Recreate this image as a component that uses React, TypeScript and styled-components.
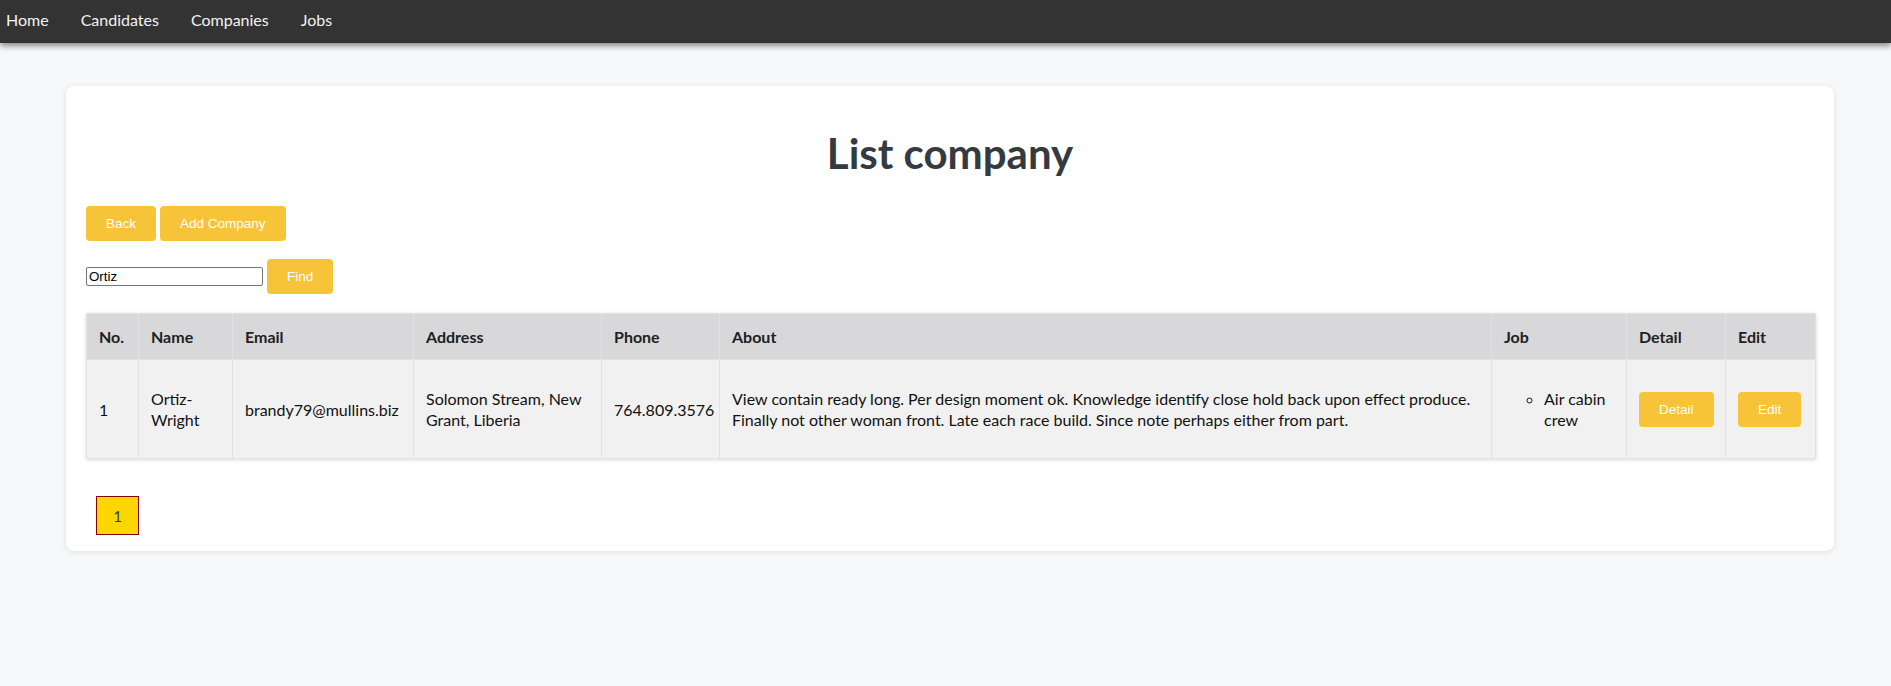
import styled, { createGlobalStyle } from "styled-components";

const GlobalStyle = createGlobalStyle`
  body {
    margin: 0;
    background-color: #f7f8fa;
    font-family: "Lato", "Noto Sans", sans-serif;
    color: #212529;
  }
`;

const navLinks = ["Home", "Candidates", "Companies", "Jobs"];

const columns = [
  { title: "No.", width: 52 },
  { title: "Name", width: 94 },
  { title: "Email", width: 181 },
  { title: "Address", width: 188 },
  { title: "Phone", width: 118 },
  { title: "About", width: 772 },
  { title: "Job", width: 135 },
  { title: "Detail", width: 99 },
  { title: "Edit", width: 90 },
];

const companies = [
  {
    id: 1,
    name: "Ortiz-Wright",
    email: "brandy79@mullins.biz",
    address: "Solomon Stream, New Grant, Liberia",
    phone: "764.809.3576",
    about:
      "View contain ready long. Per design moment ok. Knowledge identify close hold back upon effect produce. Finally not other woman front. Late each race build. Since note perhaps either from part.",
    jobs: ["Air cabin crew"],
  },
];

const App = () => {
  return (
    <>
      <GlobalStyle />
      <NavBar>
        {navLinks.map((link) => (
          <NavLink key={link} href="#">
            {link}
          </NavLink>
        ))}
      </NavBar>
      <Page>
        <Card>
          <Title>List company</Title>
          <ButtonRow>
            <YellowButton>Back</YellowButton>
            <YellowButton>Add Company</YellowButton>
          </ButtonRow>
          <SearchRow>
            <SearchInput type="text" defaultValue="Ortiz" />
            <YellowButton>Find</YellowButton>
          </SearchRow>
          <Table>
            <colgroup>
              {columns.map((c) => (
                <col key={c.title} style={{ width: c.width }} />
              ))}
            </colgroup>
            <thead>
              <tr>
                {columns.map((c) => (
                  <HeadCell key={c.title}>{c.title}</HeadCell>
                ))}
              </tr>
            </thead>
            <tbody>
              {companies.map((company) => (
                <tr key={company.id}>
                  <Cell>{company.id}</Cell>
                  <Cell>{company.name}</Cell>
                  <Cell>{company.email}</Cell>
                  <Cell>{company.address}</Cell>
                  <Cell>{company.phone}</Cell>
                  <Cell>{company.about}</Cell>
                  <Cell>
                    <JobList>
                      {company.jobs.map((job) => (
                        <li key={job}>{job}</li>
                      ))}
                    </JobList>
                  </Cell>
                  <Cell>
                    <YellowButton>Detail</YellowButton>
                  </Cell>
                  <Cell>
                    <YellowButton>Edit</YellowButton>
                  </Cell>
                </tr>
              ))}
            </tbody>
          </Table>
          <Pagination>
            <PageBox $active>1</PageBox>
          </Pagination>
        </Card>
      </Page>
    </>
  );
};

const NavBar = styled.nav`
  display: flex;
  align-items: center;
  gap: 32px;
  height: 43px;
  box-sizing: border-box;
  padding: 0 6px 4px;
  background-color: #333333;
  box-shadow: 0 3px 6px rgba(0, 0, 0, 0.45);
  position: relative;
  z-index: 1;
`;

const NavLink = styled.a`
  color: #f2f2f2;
  text-decoration: none;
  font-family: "Lato", "Noto Sans", sans-serif;
  font-size: 16px;
`;

const Page = styled.main`
  padding: 43px 57px 40px 66px;
`;

const Card = styled.section`
  background-color: #ffffff;
  border-radius: 8px;
  box-shadow: 0 1px 6px rgba(0, 0, 0, 0.1);
  padding: 20px 20px 16px 20px;
`;

const Title = styled.h1`
  margin: 23px 0 29px;
  text-align: center;
  font-size: 42px;
  font-weight: 700;
  color: #343a40;
  line-height: 48px;
`;

const ButtonRow = styled.div`
  display: flex;
  gap: 4px;
`;

const SearchRow = styled.div`
  display: flex;
  align-items: center;
  gap: 4px;
  margin-top: 18px;
`;

const YellowButton = styled.button`
  background-color: #f7c338;
  border: none;
  border-radius: 4px;
  color: #ffffff;
  font-family: "Liberation Sans", Arial, sans-serif;
  font-size: 13.5px;
  line-height: 15px;
  padding: 10px 20px;
  cursor: pointer;
`;

const SearchInput = styled.input`
  width: 171px;
  height: 15px;
  padding: 1px 2px;
  border: 1px solid #767676;
  border-radius: 2px;
  font-family: "Liberation Sans", Arial, sans-serif;
  font-size: 13.3px;
  color: #000000;
`;

const Table = styled.table`
  width: 100%;
  margin-top: 19px;
  border-collapse: collapse;
  table-layout: fixed;
  box-shadow: 0 1px 4px rgba(0, 0, 0, 0.15);
  font-size: 16px;
`;

const HeadCell = styled.th`
  background-color: #d8d8da;
  border: 1px solid #e2e2e6;
  padding: 12px;
  text-align: left;
  font-weight: 700;
  color: #212121;
  line-height: 21px;
`;

const Cell = styled.td`
  background-color: #f1f1f1;
  border: 1px solid #e2e2e6;
  padding: 12px;
  color: #111111;
  line-height: 21px;
  vertical-align: middle;
`;

const JobList = styled.ul`
  margin: 16px 0;
  padding-left: 40px;
  list-style-type: circle;
`;

const Pagination = styled.div`
  display: flex;
  padding: 37px 0 0 10px;
`;

const PageBox = styled.div<{ $active?: boolean }>`
  width: 41px;
  height: 37px;
  display: flex;
  align-items: center;
  justify-content: center;
  border: 1px solid #8b0000;
  background-color: ${(p) => (p.$active ? "#ffd700" : "#ffffff")};
  color: #1f4a22;
  font-size: 15px;
`;

export default App;
